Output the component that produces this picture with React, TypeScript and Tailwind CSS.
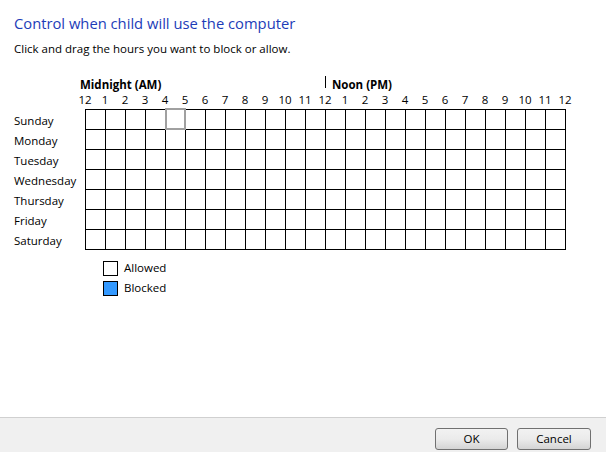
import React from "react";

const hours = ["12","1","2","3","4","5","6","7","8","9","10","11","12","1","2","3","4","5","6","7","8","9","10","11","12"];
const days = ["Sunday","Monday","Tuesday","Wednesday","Thursday","Friday","Saturday"];

export default function App() {
  const font = { fontFamily: '"Open Sans", "Noto Sans", sans-serif' };
  return (
    <div className="w-[606px] h-[452px] bg-white flex flex-col text-black overflow-hidden" style={font}>
      <div className="flex-1 pl-[14px] pt-[12px]">
        <div className="text-[14.75px] leading-[22px] text-[#1c3cb8]">Control when child will use the computer</div>
        <div className="mt-[6px] text-[11.5px] leading-[18px]">Click and drag the hours you want to block or allow.</div>

        <div className="mt-[20px] flex items-start h-[14px] pl-[66px]">
          <div className="w-[245px] text-[11.5px] font-bold leading-[14px]">Midnight (AM)</div>
          <div className="w-px h-[12px] bg-black mt-[-2px]"></div>
          <div className="ml-[6px] text-[11.5px] font-bold leading-[14px]">Noon (PM)</div>
        </div>
        <div className="flex pl-[61px] h-[17px]">
          {hours.map((h, i) => (
            <div key={i} className="w-[20px] text-center text-[11.5px] leading-[15px]">{h}</div>
          ))}
        </div>

        <div className="flex">
          <div className="w-[71px] flex flex-col pt-[2px]">
            {days.map((d) => (
              <div key={d} className="h-[20px] text-[11.5px] leading-[20px]">{d}</div>
            ))}
          </div>
          <div className="relative">
            <div className="grid grid-cols-[repeat(24,20px)] border-l border-t border-black">
              {Array.from({ length: 24 * 7 }).map((_, i) => (
                <div key={i} className="h-[20px] border-r border-b border-black"></div>
              ))}
            </div>
            <div className="absolute left-[80px] top-[-1px] w-[21px] h-[22px] border-2 border-[#a0a0a0]"></div>
          </div>
        </div>

        <div className="mt-[10px] pl-[89px] flex flex-col gap-[6px]">
          <div className="flex items-center h-[14px]">
            <div className="w-[15px] h-[15px] border border-black bg-white"></div>
            <div className="ml-[6px] text-[11.5px] leading-[14px]">Allowed</div>
          </div>
          <div className="flex items-center h-[14px]">
            <div className="w-[15px] h-[15px] border border-black bg-[#3399ff]"></div>
            <div className="ml-[6px] text-[11.5px] leading-[14px]">Blocked</div>
          </div>
        </div>
      </div>

      <div className="h-[35px] border-t border-[#d0d0d0] bg-[#f0f0f0] flex items-start justify-end pt-[10px] pr-[15px] gap-[9px]">
        <button className="w-[73px] h-[22px] rounded-[3px] border border-[#707070] bg-gradient-to-b from-[#f2f2f2] via-[#ebebeb] to-[#d4d4d4] text-[11.5px] leading-[20px]" style={font}>OK</button>
        <button className="w-[74px] h-[22px] rounded-[3px] border border-[#707070] bg-gradient-to-b from-[#f2f2f2] via-[#ebebeb] to-[#d4d4d4] text-[11.5px] leading-[20px]" style={font}>Cancel</button>
      </div>
    </div>
  );
}
